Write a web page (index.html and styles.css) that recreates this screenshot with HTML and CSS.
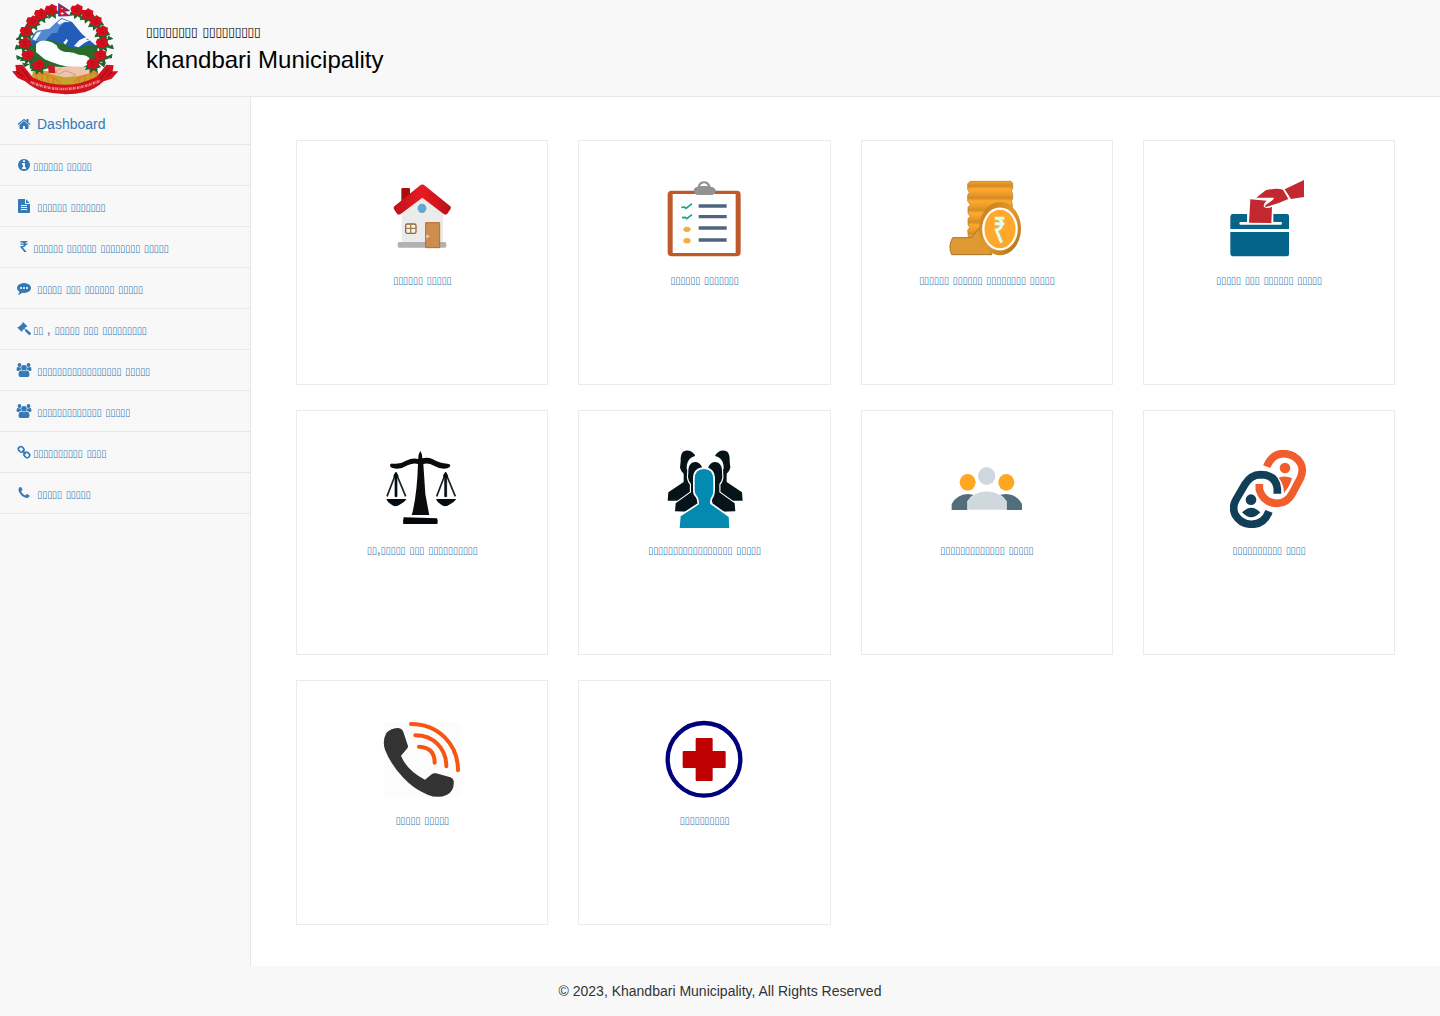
FILE: index.html
```html
<!DOCTYPE html>
<html lang="ne">
<head>
<meta charset="utf-8">
<meta name="viewport" content="width=device-width, initial-scale=1">
<title>khandbari Municipality</title>
<link rel="stylesheet" href="styles.css">
</head>
<body>
<header class="site-header">
  <svg class="emblem" viewBox="30 6 330 279" aria-hidden="true">
    <defs>
      <g id="rose"><path d="M-19 8l-5 12 14-2 2 12 10-9 12 8-1-14 11-3-12-16z" fill="#1f6330"/><path d="M-15-11l10 0 6-6 8 5 8 3-1 9 3 7-9 5-6 6-9-3-9 1-2-9-4-7z" fill="#d4101f"/><path d="M-7-1q6-7 13 0M-5 5q6 4 10-1" stroke="#9c0c1a" stroke-width="2" fill="none"/></g>
    </defs>
    <path d="M78 140l28-44 42-8 36-34 32 12 30 36 48 40-20 40H92z" fill="#245cb9"/>
    <path d="M92 122l18-30 38-6 22-20 15-10 26 12-15-2-18 16-6 16-16 2-22 24-20 4-10-8z" fill="#5288d2"/>
    <path d="M172 68l13-11 25 9-18 0-14 8zM222 138l16-18 14-6 22-8-16 14 20-4-24 12-18 14zM190 128l10-12 4 6-8 12zM98 118l12-20 14-4-8 14-10 14z" fill="#f2f7ff"/>
    <path d="M84 150l30-26 36-4 40 12 34 14 30-8 36-2 6 40-26 28-180 2z" fill="#296b29"/>
    <path d="M108 132q12-12 30-10 22 4 32 14 4 16 26 20 22-2 40 8 24 0 32 10l-2 18-22 12-40-4-26-6-24-8-20-8-26-22z" fill="#fbfefe"/>
    <path d="M100 206q86 22 182-6l20 30q-104 54-206 0z" fill="#c8a32c"/>
    <path d="M104 222q46-4 76 26M112 236l-6-18m22 24l-6-26m24 32l-6-26m22 32l-4-22M294 220q-46-2-74 28M286 234l6-18m-22 24l6-24m-24 30l6-24m-22 28l4-20" fill="none" stroke="#e67a22" stroke-width="4"/>
    <path d="M148 199l38 2 20-2 50 1 12 3-2 18-34 8-38 3-44-11z" fill="#efc4ae"/>
    <path d="M184 204l-18 12 12 6 18-10 32 12-14 8" fill="none" stroke="#d69a86" stroke-width="3"/>
    <path d="M144 198l20 0 2 22-20-2zM264 184l24-6 2 32-24-4z" fill="#cd1724"/>
    <g>
      <use href="#rose" x="154" y="28"/><use href="#rose" x="122" y="41"/><use href="#rose" x="98" y="63"/><use href="#rose" x="79" y="92"/><use href="#rose" x="75" y="128"/><use href="#rose" x="84" y="164"/><use href="#rose" x="116" y="194"/>
      <use href="#rose" x="231" y="28"/><use href="#rose" x="263" y="41"/><use href="#rose" x="288" y="62"/><use href="#rose" x="307" y="92"/><use href="#rose" x="307" y="127"/><use href="#rose" x="302" y="164"/><use href="#rose" x="279" y="190"/>
    </g>
    <path d="M62 108l-14 10 16 2m-14 14l-4 14 18-6m-14 24l2 12 18-4m-2 14l6 12 14-8M324 108l14 8-16 4m14 14l4 12-18-4m14 20l-2 12-18-2m0 14l-4 14-14-10" fill="#1f6330" stroke="#1f6330" stroke-width="3"/>
    <path d="M176 11l32 21-18 2 18 13-32 1z" fill="#d8122b" stroke="#30409b" stroke-width="3"/>
    <path d="M182 25q4 5 8 0zM181 40l6-3 5 4-6 3z" fill="#fff"/>
    <path d="M36 214l13-1-3-18 22-1 30 38q96 46 192-2l29-36 22 2-3 18 17 0-20 22-24 8q-22 22-56 32-60 14-128-2-26-8-52-30l-22-10z" fill="#d3121f"/>
    <path d="M66 206l28 38M326 206l-30 38M48 214l20 14M336 216l-16 12" stroke="#8f0b16" stroke-width="3" fill="none"/>
    <path d="M92 246q100 44 208-4" fill="none" stroke="#ea8f88" stroke-width="8" stroke-dasharray="3 2 5 2 2 3 6 2"/>
  </svg>
  <div class="titles">
    <p class="title-ne"><span class="ne">▯▯▯▯▯▯▯▯</span> <span class="ne">▯▯▯▯▯▯▯▯▯</span></p>
    <h1 class="title-en">khandbari Municipality</h1>
  </div>
</header>

<div class="layout">
  <nav class="sidebar">
    <ul class="menu">
      <li><a href="#"><svg class="fa" viewBox="0 0 1792 1792" aria-hidden="true"><path d="M1472 992v480q0 26-19 45t-45 19h-384v-384h-256v384h-384q-26 0-45-19t-19-45v-480q0-1 .5-3t.5-3l575-474 575 474q1 2 1 6zm223-69l-62 74q-8 9-21 11h-3q-13 0-21-7l-692-577-692 577q-12 8-24 7-13-2-21-11l-62-74q-8-10-7-23.500t11-21.500l719-599q32-26 76-26t76 26l244 204v-195q0-14 9-23t23-9h192q14 0 23 9t9 23v408l219 182q10 8 11 21.500t-7 23.500z"/></svg><span class="spaced">Dashboard</span></a></li>
      <li><a href="#"><svg class="fa" viewBox="0 0 1792 1792" aria-hidden="true"><path d="M1152 1376v-160q0-14-9-23t-23-9h-96v-512q0-14-9-23t-23-9h-320q-14 0-23 9t-9 23v160q0 14 9 23t23 9h96v320h-96q-14 0-23 9t-9 23v160q0 14 9 23t23 9h448q14 0 23-9t9-23zm-128-896v-160q0-14-9-23t-23-9h-192q-14 0-23 9t-9 23v160q0 14 9 23t23 9h192q14 0 23-9t9-23zm640 416q0 209-103 385.500t-279.500 279.500-385.500 103-385.500-103-279.500-279.500-103-385.500 103-385.500 279.500-279.500 385.500-103 385.500 103 279.500 279.500 103 385.500z"/></svg><span><span class="ne">▯▯▯▯▯▯</span> <span class="ne">▯▯▯▯▯</span></span></a></li>
      <li><a href="#"><svg class="fa" viewBox="0 0 1792 1792" aria-hidden="true"><path d="M1596 476q14 14 28 36h-472v-472q22 14 36 28zm-476 164h544v1056q0 40-28 68t-68 28h-1344q-40 0-68-28t-28-68v-1600q0-40 28-68t68-28h800v544q0 40 28 68t68 28zm160 736v-64q0-14-9-23t-23-9h-704q-14 0-23 9t-9 23v64q0 14 9 23t23 9h704q14 0 23-9t9-23zm0-256v-64q0-14-9-23t-23-9h-704q-14 0-23 9t-9 23v64q0 14 9 23t23 9h704q14 0 23-9t9-23zm0-256v-64q0-14-9-23t-23-9h-704q-14 0-23 9t-9 23v64q0 14 9 23t23 9h704q14 0 23-9t9-23z"/></svg><span class="spaced"><span class="ne">▯▯▯▯▯▯</span> <span class="ne">▯▯▯▯▯▯▯</span></span></a></li>
      <li><a href="#"><svg class="fa" viewBox="0 0 1792 1792" aria-hidden="true"><path d="M1345 470v102q0 14-9 23t-23 9h-168q-23 144-129 234t-276 110q167 178 459 536 14 16 4 34-8 18-29 18h-195q-16 0-25-12-306-367-498-571-9-9-9-22v-127q0-13 9.500-22.500t22.500-9.500h112q132 0 212.500-43t102.500-125h-427q-14 0-23-9t-9-23v-102q0-14 9-23t23-9h413q-57-113-268-113h-145q-13 0-22.500-9.500t-9.500-22.500v-133q0-14 9-23t23-9h832q14 0 23 9t9 23v102q0 14-9 23t-23 9h-233q47 61 64 144h171q14 0 23 9t9 23z"/></svg><span><span class="ne">▯▯▯▯▯▯</span> <span class="ne">▯▯▯▯▯▯</span> <span class="ne">▯▯▯▯▯▯▯▯</span> <span class="ne">▯▯▯▯▯</span></span></a></li>
      <li><a href="#"><svg class="fa" viewBox="0 0 1792 1792" aria-hidden="true"><path d="M640 896q0-53-37.500-90.500t-90.500-37.500-90.500 37.500-37.500 90.500 37.500 90.500 90.500 37.500 90.500-37.500 37.500-90.500zm384 0q0-53-37.500-90.500t-90.500-37.500-90.500 37.500-37.500 90.500 37.500 90.500 90.500 37.500 90.500-37.500 37.500-90.500zm384 0q0-53-37.500-90.500t-90.500-37.500-90.500 37.500-37.500 90.500 37.500 90.500 90.500 37.500 90.500-37.500 37.500-90.500zm384 0q0 174-120 321.500t-326 233-450 85.500q-110 0-211-18-173 173-435 229-52 10-86 13-12 1-22-6t-13-18q-4-15 20-37 5-5 23.500-21.500t25.500-23.500 23.500-25.500 24-31.500 20.500-37 20-48 14.500-57.500 12.500-72.500q-146-90-229.500-216.500t-83.500-269.500q0-174 120-321.500t326-233 450-85.500 450 85.500 326 233 120 321.500z"/></svg><span class="spaced"><span class="ne">▯▯▯▯▯</span> <span class="ne">▯▯▯</span> <span class="ne">▯▯▯▯▯▯</span> <span class="ne">▯▯▯▯▯</span></span></a></li>
      <li><a href="#"><svg class="fa" viewBox="0 0 14 14" aria-hidden="true"><path d="M5.300.6q.7-.6 1.300 0l3.200 3.200q.6.700 0 1.300l-.9-.2-1.300 1.300 1.200 1.200q.5-.5 1.100 0l3.700 3.400q.8.800 0 1.500l-.4.500q-.8.700-1.500 0L8.200 9.300q-.5-.6 0-1.200L7 7l-1.700 1.600.2.900q-.6.600-1.200 0L.7 6.100q-.6-.7 0-1.200l.9.200L5.500 1.500z"/></svg><span><span class="ne">▯▯</span> , <span class="ne">▯▯▯▯▯</span> <span class="ne">▯▯▯</span> <span class="ne">▯▯▯▯▯▯▯▯▯</span></span></a></li>
      <li><a href="#"><svg class="fa" viewBox="0 0 15 14" aria-hidden="true"><use href="#users"/></svg><span class="spaced"><span class="ne">▯▯▯▯▯▯▯▯▯▯▯▯▯▯▯▯▯</span> <span class="ne">▯▯▯▯▯</span></span></a></li>
      <li><a href="#"><svg class="fa" viewBox="0 0 15 14" aria-hidden="true"><g id="users"><circle cx="3" cy="2" r="1.900"/><circle cx="12" cy="2" r="1.900"/><circle cx="7.500" cy="4.800" r="2.800"/><path d="M1.300 3.800Q3 4.800 4.300 4.200 4 6.200 5 7H3.300L2.400 8H1.200Q0 7.800 0 6.700 0 4.200 1.300 3.800zM13.700 3.800Q12 4.800 10.700 4.200 11 6.200 10 7h1.700l.9 1h1.200Q15 7.800 15 6.700 15 4.200 13.700 3.800zM5 7.500q2.500 1.600 5 0 3 0 3 4.300 0 2.200-2 2.200H4q-2 0-2-2.200Q2 7.500 5 7.500z"/></g></svg><span class="spaced"><span class="ne">▯▯▯▯▯▯▯▯▯▯▯▯▯</span> <span class="ne">▯▯▯▯▯</span></span></a></li>
      <li><a href="#"><svg class="fa" viewBox="0 0 14 14" aria-hidden="true"><g fill="none" stroke="currentColor" stroke-width="1.700"><rect x="1.300" y="2" width="5.800" height="4.800" rx="2.300" transform="rotate(45 4.200 4.400)"/><rect x="6.900" y="7.500" width="5.800" height="4.800" rx="2.300" transform="rotate(45 9.800 9.900)"/><path d="M5.200 5.500l3.600 3.600"/></g></svg><span><span class="ne">▯▯▯▯▯▯▯▯▯▯</span> <span class="ne">▯▯▯▯</span></span></a></li>
      <li><a href="#"><svg class="fa" viewBox="0 0 1792 1792" aria-hidden="true"><path d="M1600 1240q0 27-10 70.500t-21 68.500q-21 50-122 106-94 51-186 51-27 0-52.500-3.500t-57.500-12.500-47.500-14.500-55.500-20.500-49-18q-98-35-175-83-128-79-264.500-215.500t-215.500-264.500q-48-77-83-175-3-9-18-49t-20.500-55.500-14.500-47.500-12.500-57.500-3.500-52.500q0-92 51-186 56-101 106-122 25-11 68.500-21t70.500-10q14 0 21 3 18 6 53 76 11 19 30 54t35 63.500 31 53.500q3 4 17.500 25t21.500 35.500 7 28.500q0 20-28.500 50t-62 55-62 53-28.500 46q0 9 5 22.500t8.500 20.500 14 24 11.500 19q76 137 174 235t235 174q2 1 19 11.500t24 14 20.500 8.500 22.500 5q18 0 46-28.500t53-62 55-62 50-28.500q14 0 28.500 7t35.500 21.500 25 17.500q25 15 53.500 31t63.500 35 54 30q70 35 76 53 3 7 3 21z"/></svg><span class="spaced"><span class="ne">▯▯▯▯▯</span> <span class="ne">▯▯▯▯▯</span></span></a></li>
    </ul>
  </nav>

  <main class="cards">
    <a class="card" href="#">
      <svg class="card-icon" viewBox="39 45 234 234" aria-hidden="true">
        <defs><linearGradient id="roof" x1="0" x2="1"><stop offset="0" stop-color="#bd1218"/><stop offset=".5" stop-color="#e81c22"/><stop offset="1" stop-color="#b91016"/></linearGradient></defs>
        <path d="M94 72q0-3 4-3h18q4 0 4 3v40H94z" fill="#a90d12"/>
        <path d="M95 138l61-46 63 46v94H95z" fill="#ebebeb"/>
        <rect x="83" y="231" width="146" height="17" rx="5" fill="#b1b1b1"/>
        <path d="M149 62q8-7 16 0l76 62q4 4 0 9l-9 13q-5 5-11 1l-64-49-65 49q-6 4-11-1l-9-13q-3-5 1-9z" fill="url(#roof)"/>
        <ellipse cx="156" cy="130" rx="13" ry="14" fill="#64a5d1"/>
        <rect x="107" y="177" width="31" height="28" rx="5" fill="#e5faf5" stroke="#98633e" stroke-width="4"/>
        <path d="M122 178v26M108 190h29" stroke="#ad7b46" stroke-width="4"/>
        <path d="M167 173h42v75h-42z" fill="#cc8d4e" stroke="#b36d30" stroke-width="3"/>
        <path d="M171 209v11M172 214h6" stroke="#eee" stroke-width="3"/>
      </svg>
      <span class="card-label"><span class="ne">▯▯▯▯▯▯</span> <span class="ne">▯▯▯▯▯</span></span>
    </a>
    <a class="card" href="#">
      <svg class="card-icon" viewBox="76 45 234 234" aria-hidden="true">
        <rect x="84" y="77" width="219" height="197" rx="12" fill="#bd592b"/>
        <path d="M99 87h189v177H99z" fill="#fff"/>
        <path fill-rule="evenodd" d="M162 76q0-8 12-11 4-16 19-16t20 16q15 3 15 11 0 14-14 14h-38q-14 0-14-14zm19-13h23q-2-8-11-8t-12 8z" fill="#929292"/>
        <path d="M125 127l9-1 5 4 18-14M127 158l9-1 5 4 16-12" fill="none" stroke="#12a883" stroke-width="5"/>
        <ellipse cx="142" cy="193" rx="11" ry="8" fill="#f4af42"/><ellipse cx="142" cy="227" rx="11" ry="8" fill="#f4af42"/>
        <path d="M177 123h84M177 155h84M177 189h84M177 225h84" stroke="#4d657d" stroke-width="10"/>
      </svg>
      <span class="card-label"><span class="ne">▯▯▯▯▯▯</span> <span class="ne">▯▯▯▯▯▯▯</span></span>
    </a>
    <a class="card" href="#">
      <svg class="card-icon" viewBox="113 45 234 234" aria-hidden="true">
        <defs>
          <linearGradient id="coins" x2="0" y2="36" gradientUnits="userSpaceOnUse" y1="0" x1="0" spreadMethod="repeat"><stop offset="0" stop-color="#ffaa2c"/><stop offset=".5" stop-color="#e8982a"/><stop offset=".75" stop-color="#d28b24"/><stop offset="1" stop-color="#ffaa2c"/></linearGradient>
          <linearGradient id="rim" x1="0" y1="0" x2="1" y2="1"><stop offset="0" stop-color="#c47b1c"/><stop offset=".5" stop-color="#e39a2b"/><stop offset="1" stop-color="#a96d1a"/></linearGradient>
        </defs>
        <path d="M180 49h122l5 6v16l-4 7 4 8v15l-4 7 3 8v60l-30 40H174l-2-20 6-9-5-8v-17l6-8-6-9v-18l7-8-8-11V90l5-8-5-9V56z" fill="url(#coins)" stroke="#b87921" stroke-width="2"/>
        <path d="M127 218h52q6 0 10-6l16-22 40 79H124q-12-26 3-51z" fill="#df9933" stroke="#a9762c" stroke-width="3"/>
        <ellipse cx="269" cy="191" rx="63" ry="80" fill="url(#rim)"/>
        <ellipse cx="269" cy="192" rx="50" ry="61" fill="#ffa82b" stroke="#fff" stroke-width="7"/>
        <path d="M253 160h29M253 176h29M256 160q18 1 18 16 0 15-16 19l16 38" fill="none" stroke="#ddfff0" stroke-width="9"/>
      </svg>
      <span class="card-label"><span class="ne">▯▯▯▯▯▯</span> <span class="ne">▯▯▯▯▯▯</span> <span class="ne">▯▯▯▯▯▯▯▯</span> <span class="ne">▯▯▯▯▯</span></span>
    </a>
    <a class="card" href="#">
      <svg class="card-icon" viewBox="90 45 234 234" aria-hidden="true">
        <path d="M98 147h43v24h-21q-4 4 0 8h124q4-4 0-8h-24v-24h41q6 0 6 6v39H91v-37q0-7 7-8zM91 201h176v67q0 6-6 6H98q-7-1-7-8z" fill="#04648a"/>
        <path d="M151 103l49 4q-12 10-8 19 9 6 24 0l-2 48-67-1zM169 98l28-22q32-8 52-2l16 28q-32 15-70 24l1-5 23-17 3-6zM254 73l58-28v51l-39 6z" fill="#c3272f"/>
      </svg>
      <span class="card-label"><span class="ne">▯▯▯▯▯</span> <span class="ne">▯▯▯</span> <span class="ne">▯▯▯▯▯▯</span> <span class="ne">▯▯▯▯▯</span></span>
    </a>
    <a class="card" href="#">
      <svg class="card-icon" viewBox="69 45 234 234" aria-hidden="true">
        <path d="M181 48q6 8 6 22 15-5 30 2 25 14 45 14 8 0 9 5 0 6-9 9-20 4-40-8-18-10-32-5l6 90 11 59 1 4h-53l2-6q14-56 17-147-14-4-31 4-20 13-42 9-11-2-11-10 1-6 9-4 20 3 39-9 20-10 37-5-1-15 6-24z" fill="#0b0b0b"/>
        <path d="M131 247l100 3q4 8 1 17H130q-2-10 1-20z" fill="#03070a"/>
        <g id="pan"><path d="M79 192h61q-8 11-19 16-15 12-28 0-10-5-14-16z" fill="#020c14"/><path d="M108 114l-27 70M108 114l29 70" stroke="#142129" stroke-width="5"/><path d="M108 111l6 11-3 8v55h-6v-55l-4-8z" fill="#020c14" stroke="#020c14" stroke-width="2"/></g>
        <use href="#pan" x="149"/>
      </svg>
      <span class="card-label"><span class="ne">▯▯</span>,<span class="ne">▯▯▯▯▯</span> <span class="ne">▯▯▯</span> <span class="ne">▯▯▯▯▯▯▯▯▯▯</span></span>
    </a>
    <a class="card" href="#">
      <svg class="card-icon" viewBox="76 45 234 234" aria-hidden="true">
        <g id="side"><path d="M166 60q-16-20-36-10-8 8-7 28l-2 20q3 12 11 18v25l-46 31-2 25h70z" fill="#06141a"/>
        <path d="M172 62q-32 4-31 40l10 6 24-20z" fill="#fff"/>
        <path d="M187 96q-10-20-30-13-12 8-11 28l-1 16q2 14 9 20v25l-46 33-2 24 66 2z" fill="#06141a" stroke="#fff" stroke-width="7" paint-order="stroke"/></g>
        <use href="#side" transform="translate(393 0) scale(-1 1)"/>
        <path d="M193 102q28 0 28 32v30q0 8-3 18-7 8-7 24l56 40 2 33H120l3-35 55-36q0-18-7-26-7-6-6-20v-30q0-30 28-30z" fill="#038ab0" stroke="#fff" stroke-width="10" paint-order="stroke"/>
      </svg>
      <span class="card-label"><span class="ne">▯▯▯▯▯▯▯▯▯▯▯▯▯▯▯▯▯</span> <span class="ne">▯▯▯▯▯</span></span>
    </a>
    <a class="card" href="#">
      <svg class="card-icon" viewBox="53 45 234 234" aria-hidden="true">
        <ellipse cx="112" cy="142" rx="24" ry="25" fill="#ffa722"/><ellipse cx="228" cy="142" rx="24" ry="25" fill="#ffa722"/><ellipse cx="169" cy="123" rx="26" ry="27" fill="#cfd8dc"/>
        <path d="M64 225v-18q16-29 48-30 36 0 50 30v18zM275 225v-18q-16-29-48-30-36 0-50 30v18z" fill="#526e7b"/>
        <path d="M112 225v-26q18-30 57-31 40 1 59 31v26z" fill="#cfd8dc" stroke="#fff" stroke-width="2"/>
      </svg>
      <span class="card-label"><span class="ne">▯▯▯▯▯▯▯▯▯▯▯▯▯</span> <span class="ne">▯▯▯▯▯</span></span>
    </a>
    <a class="card" href="#">
      <svg class="card-icon" viewBox="60 45 234 234" aria-hidden="true">
        <g fill="none" stroke-width="23">
          <path d="M170 95Q186 56 220 56q35 0 52 29 10 21-1 45l-24 45q-15 29-45 30-41 0-54-41v-17" stroke="#f25d2d"/>
          <path d="M202 176v-14q-4-43-51-43-29 1-46 29l-27 46q-13 23-2 46 16 27 48 28 39 0 53-39" stroke="#113f58"/>
        </g>
        <circle cx="225" cy="99" r="16" fill="#f25d2d"/><path d="M206 128q18-8 40 1-5 23-24 45-1-28-16-46z" fill="#f25d2d"/>
        <circle cx="123" cy="194" r="16" fill="#113f58"/><path d="M96 232q28-27 55 0-27 30-55 0z" fill="#113f58"/>
      </svg>
      <span class="card-label"><span class="ne">▯▯▯▯▯▯▯▯▯▯</span> <span class="ne">▯▯▯▯</span></span>
    </a>
    <a class="card" href="#">
      <svg class="card-icon" viewBox="69 45 234 234" aria-hidden="true">
        <path d="M72 51h230v226H72z" fill="#fcfcfc"/>
        <path d="M112 69q14 0 18 12l14 42q1 4-3 8l-18 21q18 45 72 72l20-16q6-5 13-3l43 12q8 3 10 10 3 30-20 42-26 13-58 0-43-18-73-51-37-38-55-84-9-26 4-50 12-14 33-15z" fill="#333"/>
        <path d="M177 125q47 2 47 48M166 91c55 0 93 40 93 93M153 57c82 0 141 61 141 139" fill="none" stroke="#f85412" stroke-width="12" stroke-linecap="round"/>
      </svg>
      <span class="card-label"><span class="ne">▯▯▯▯▯</span> <span class="ne">▯▯▯▯▯</span></span>
    </a>
    <a class="card" href="#">
      <svg class="card-icon" viewBox="916 45 234 234" aria-hidden="true">
        <circle cx="1033" cy="163" r="109" fill="none" stroke="#00007d" stroke-width="13"/>
        <path d="M1011 99h45q3 0 3 3v36h36q3 0 3 3v45q0 3-3 3h-36v36q0 3-3 3h-45q-3 0-3-3v-36h-36q-3 0-3-3v-45q0-3 3-3h36v-36q0-3 3-3z" fill="#bf0000"/>
      </svg>
      <span class="card-label"><span class="ne">▯▯▯▯▯▯▯▯▯▯</span></span>
    </a>
  </main>
</div>

<footer class="site-footer">© 2023, Khandbari Municipality, All Rights Reserved</footer>
</body>
</html>
```
FILE: styles.css
```css
* { box-sizing: border-box; }

body {
  margin: 0;
  min-height: 100vh;
  display: flex;
  flex-direction: column;
  font: 14px/20px "Liberation Sans", Arial, sans-serif;
  color: #333;
  background: #f8f8f8;
}

a { color: #337ab7; text-decoration: none; }

.ne {
  font-family: "DejaVu Sans Condensed", "DejaVu Sans", sans-serif;
  font-size: 10px;
  line-height: 1;
}

.site-header {
  display: flex;
  gap: 26px;
  padding: 2px 10px 1px;
  border-bottom: 1px solid #e7e7e7;
}

.emblem { width: 110px; height: 93px; flex: none; }

.titles { padding-top: 16px; color: #000; }

.title-ne { margin: 0; font-size: 18px; line-height: 24px; }

.title-ne .ne { font-size: 13px; }

.title-en { margin: 4px 0 0; font-size: 24px; font-weight: 400; line-height: 28px; }

.layout { flex: 1; display: flex; }

.sidebar { width: 251px; flex: none; border-right: 1px solid #e7e7e7; }

.menu { margin: 0; padding: 7px 0 0; list-style: none; }

.menu li { border-bottom: 1px solid #e7e7e7; }

.menu a { display: flex; align-items: center; padding: 10px 15px; }

.fa { width: 18px; height: 14px; flex: none; fill: currentColor; }

.spaced { margin-left: 4px; }

.cards {
  flex: 1;
  display: grid;
  grid-template-columns: repeat(4, 1fr);
  align-content: start;
  gap: 25px 30px;
  padding: 43px 45px 41px;
  background: #fff;
}

.card {
  display: flex;
  flex-direction: column;
  align-items: center;
  gap: 11px;
  min-height: 245px;
  padding: 39px 15px;
  border: 1px solid #ebebeb;
}

.card-icon { width: 78px; height: 78px; }

.card-label { text-align: center; }

.site-footer { padding: 15px; text-align: center; }
```
